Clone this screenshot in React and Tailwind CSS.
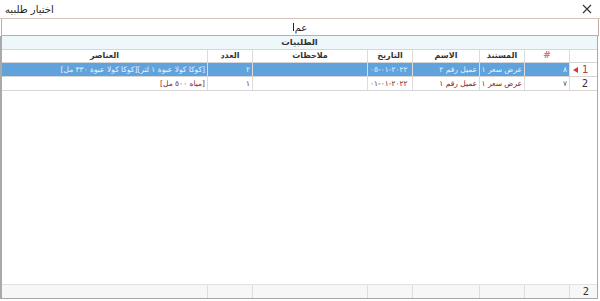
import React from "react";

const cols = "grid grid-cols-[206px_45px_115px_45px_67px_45px_45px_27px]";

function Cell({ children, className = "" }) {
  return (
    <div className={"border-r border-[#dcdcdc] overflow-hidden whitespace-nowrap px-[2px] flex items-center " + className}>
      {children}
    </div>
  );
}

const sel = "bg-[#5fa2dc] text-[#eaf3ff] border-[#8dbde6]";

export default function App() {
  const font = { fontFamily: '"DejaVu Sans", sans-serif' };
  return (
    <div className="w-[600px] h-[301px] bg-white flex flex-col text-[#222]" style={font}>
      {/* title bar */}
      <div className="h-[19px] flex items-center justify-between border-b border-[#d8c3bb] px-[5px] shrink-0">
        <span className="text-[10px] text-[#222]" dir="rtl">اختيار طلبيه</span>
        <svg width="10" height="10" viewBox="0 0 10 10" className="mr-[3px]">
          <path d="M1 1L9 9M9 1L1 9" stroke="#333" strokeWidth="1.1" />
        </svg>
      </div>
      {/* search box */}
      <div className="h-[17px] mx-[1px] border-x border-b border-[#c9a79c] flex items-center justify-center shrink-0">
        <span className="w-px h-[8px] bg-[#222] mr-[1px]" />
        <span className="text-[10px]" dir="rtl">عم</span>
      </div>
      {/* grid frame */}
      <div className="flex-1 flex flex-col border-l-2 border-r border-b border-[#a9a9a9] mr-[2px] mb-[2px]">
        <div className="h-[14px] bg-[#eef8fa] border-b border-[#d6d6d6] flex items-center justify-center text-[8.5px] font-bold text-[#333] shrink-0" dir="rtl">
          الطلبيات
        </div>
        {/* header */}
        <div className={cols + " h-[13px] border-b border-[#d6d6d6] text-[8px] font-bold text-[#333] shrink-0"} dir="ltr">
          <Cell className="justify-center">العناصر</Cell>
          <Cell className="justify-center">العدد</Cell>
          <Cell className="justify-center">ملاحظات</Cell>
          <Cell className="justify-center">التاريخ</Cell>
          <Cell className="justify-center">الاسم</Cell>
          <Cell className="justify-center">المستند</Cell>
          <Cell className="justify-center text-[#e0706a] text-[9px]">#</Cell>
          <Cell className="border-r-0"></Cell>
        </div>
        {/* row 1 */}
        <div className={cols + " h-[14px] border-b border-[#d6d6d6] text-[7.5px] shrink-0"}>
          <Cell className={"justify-end " + sel}><span dir="rtl">[كوكا كولا عبوة ١ لتر][كوكا كولا عبوة ٣٣٠ مل]</span></Cell>
          <Cell className={"justify-end " + sel}>٢</Cell>
          <Cell className={"justify-end " + sel}></Cell>
          <Cell className={"justify-start " + sel}><bdo dir="ltr">٠٥-٠١-٢٠٢٢</bdo></Cell>
          <Cell className={"justify-end " + sel}><span dir="rtl">عميل رقم ٢</span></Cell>
          <Cell className={"justify-end " + sel}><span dir="rtl">عرض سعر ١</span></Cell>
          <Cell className={"justify-end " + sel}>٨</Cell>
          <Cell className="border-r-0 justify-start gap-[4px] pl-[3px]">
            <svg width="5" height="6" viewBox="0 0 5 6"><path d="M0 3L5 0V6Z" fill="#d83a3a" /></svg>
            <span className="text-[10px] text-[#b04040]">1</span>
          </Cell>
        </div>
        {/* row 2 */}
        <div className={cols + " h-[14px] border-b border-[#d6d6d6] text-[7.5px] text-[#7a1f1f] shrink-0"}>
          <Cell className="justify-end"><span dir="rtl">[مياه ٥٠٠ مل]</span></Cell>
          <Cell className="justify-end">١</Cell>
          <Cell className="justify-end"></Cell>
          <Cell className="justify-start"><bdo dir="ltr">٠١-٠١-٢٠٢٢</bdo></Cell>
          <Cell className="justify-end"><span dir="rtl">عميل رقم ١</span></Cell>
          <Cell className="justify-end"><span dir="rtl">عرض سعر ١</span></Cell>
          <Cell className="justify-end text-[#555]">٧</Cell>
          <Cell className="border-r-0 justify-end pr-[9px]">
            <span className="text-[10px] text-[#333]">2</span>
          </Cell>
        </div>
        <div className="flex-1" />
        {/* footer */}
        <div className={cols + " h-[14px] border-t border-[#e2e2e2] bg-[#f7f7f7] shrink-0 text-[9px]"}>
          <Cell className="border-[#dedede]"></Cell>
          <Cell className="border-[#dedede]"></Cell>
          <Cell className="border-[#dedede]"></Cell>
          <Cell className="border-[#dedede]"></Cell>
          <Cell className="border-[#dedede]"></Cell>
          <Cell className="border-[#dedede]"></Cell>
          <Cell className="border-[#dedede]"></Cell>
          <Cell className="border-r-0 justify-end pr-[8px]"><span className="text-[10px] text-[#333]">2</span></Cell>
        </div>
      </div>
    </div>
  );
}
